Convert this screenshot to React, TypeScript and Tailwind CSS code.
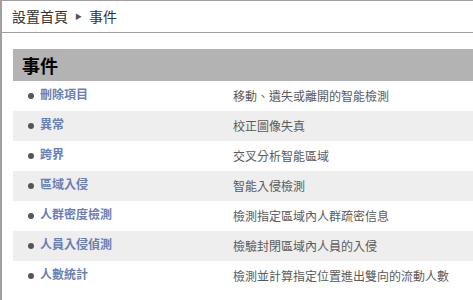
const events = [
  { name: "刪除項目", desc: "移動、遺失或離開的智能檢測" },
  { name: "異常", desc: "校正圖像失真" },
  { name: "跨界", desc: "交叉分析智能區域" },
  { name: "區域入侵", desc: "智能入侵檢測" },
  { name: "人群密度檢測", desc: "檢測指定區域內人群疏密信息" },
  { name: "人員入侵偵測", desc: "檢驗封閉區域內人員的入侵" },
  { name: "人數統計", desc: "檢測並計算指定位置進出雙向的流動人數" },
];

export default function App() {
  return (
    <div
      className="w-[473px] h-[300px] bg-white border-t border-l-2 border-[#a0a0a0] overflow-hidden"
      style={{ fontFamily: '"Noto Sans CJK TC", "Noto Sans", sans-serif' }}
    >
      <div className="h-[32px] flex items-center pl-[10px] text-[14px] text-[#333] border-b border-[#a0a0a0]">
        設置首頁
        <span className="text-[7px] text-[#555] mx-[7px]">▶</span>
        事件
      </div>
      <div className="pl-[11px] pt-[16px]">
        <div className="h-[32px] bg-[#b3b3b3] flex items-center pl-[9px] text-[18px] font-bold text-black">
          事件
        </div>
        {events.map((ev, i) => (
          <div
            key={ev.name}
            className={`h-[30px] flex items-center text-[12px] ${i % 2 === 1 ? "bg-[#eeeeee]" : "bg-white"}`}
          >
            <div className="w-[27px] flex justify-end pr-[6px]">
              <span className="w-[6px] h-[6px] rounded-full bg-[#555]" />
            </div>
            <div className="w-[193px] font-bold text-[#6a7fb5] -mt-[4px]">{ev.name}</div>
            <div className="text-[#5a5a5a]">{ev.desc}</div>
          </div>
        ))}
      </div>
    </div>
  );
}
